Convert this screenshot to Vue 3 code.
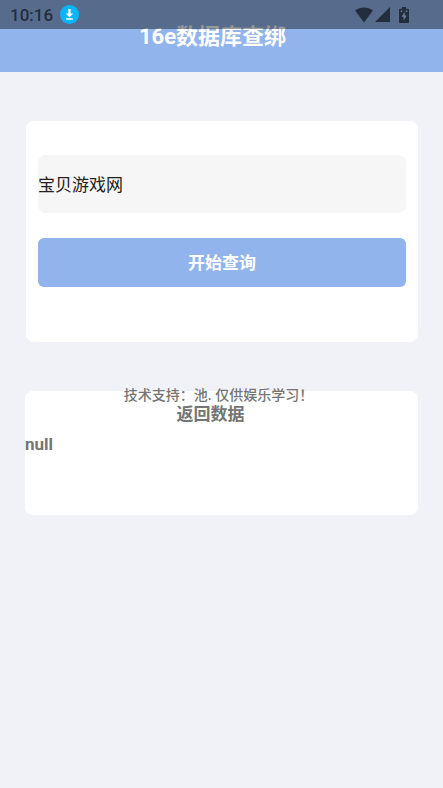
<script setup>
import { ref } from 'vue'

const keyword = ref('宝贝游戏网')
const result = ref('null')
</script>

<template>
  <div class="page">
    <div class="status">
      <span class="clock">10:16</span>
      <svg class="download" viewBox="0 0 19 19" aria-hidden="true">
        <circle cx="9.5" cy="9.5" r="9.5" fill="#06b6fc" />
        <path d="M8.3 4h2.4v4.400h2.600L9.500 12.200 5.700 8.400h2.600z M6.200 13.200h6.600v1.500H6.200z" fill="#fff" />
      </svg>
      <div class="indicators">
        <svg class="wifi" viewBox="0 0 18 16" aria-hidden="true">
          <path d="M0 3.600C2.600 1.600 5.600.500 9 .500s6.400 1.100 9 3.100L9 15.500z" fill="#222d3d" />
        </svg>
        <svg class="signal" viewBox="0 0 15 15" aria-hidden="true">
          <path d="M15 0v15H0z" fill="#222d3d" />
        </svg>
        <svg class="battery" viewBox="0 0 10 16" aria-hidden="true">
          <path d="M3 0h4v1.700h2.200q.8 0 .8.8v12.700q0 .8-.8.8H.8q-.8 0-.8-.8V2.500q0-.8.8-.8H3z" fill="#222d3d" />
          <path d="M5.700 5 2.600 9.700h2v3.800l3-4.900H5.700z M1.700 3.500h1.500v1.400H1.700z M6.800 3.500h1.500v1.400H6.800z" fill="#71809a" />
        </svg>
      </div>
    </div>

    <header class="header">
      <h1>16e数据库查绑</h1>
    </header>

    <main class="content">
      <form class="card query" @submit.prevent>
        <input v-model="keyword" class="field" type="text" aria-label="查询内容" />
        <button class="submit" type="submit">开始查询</button>
      </form>

      <section class="card output">
        <p class="support">技术支持：池. 仅供娱乐学习！</p>
        <h2>返回数据</h2>
        <p class="result">{{ result }}</p>
      </section>
    </main>
  </div>
</template>

<style>
body {
  margin: 0;
  background: #f1f2f8;
}
</style>

<style scoped>
.page {
  position: relative;
  min-height: 100vh;
  background: #f1f2f8;
  color: #757575;
  font-family: Roboto, "Noto Sans CJK SC", sans-serif;
}

.status {
  position: absolute;
  z-index: 1;
  top: 0;
  left: 0;
  right: 0;
  box-sizing: border-box;
  height: 29px;
  padding: 0 34px 0 10px;
  display: flex;
  align-items: center;
  background: rgba(0, 0, 0, 0.4);
}

.clock {
  color: #222d3d;
  font-size: 17px;
  font-weight: 500;
  line-height: 29px;
  padding-top: 2px;
}

.download {
  width: 19px;
  height: 19px;
  margin-left: 7px;
}

.indicators {
  margin-left: auto;
  display: flex;
  align-items: center;
}

.wifi {
  width: 18px;
  height: 16px;
}

.signal {
  width: 15px;
  height: 15px;
  margin-left: 2px;
}

.battery {
  width: 10px;
  height: 16px;
  margin-left: 9px;
}

.header {
  box-sizing: border-box;
  height: 72px;
  padding-top: 2px;
  background: #92b4ec;
  display: flex;
  align-items: center;
  justify-content: center;
}

h1 {
  margin: 0;
  padding-right: 18px;
  color: #fff;
  font-size: 22px;
  font-weight: 700;
  line-height: 32px;
}

.content {
  padding: 49px 25px;
  display: flex;
  flex-direction: column;
  gap: 49px;
}

.card {
  background: #fff;
  border-radius: 8px;
}

.query {
  margin-left: 1px;
  padding: 34px 12px 55px;
  display: flex;
  flex-direction: column;
  gap: 25px;
}

.field {
  box-sizing: border-box;
  width: 100%;
  height: 58px;
  padding: 0 0 2px;
  border: 0;
  border-radius: 8px;
  outline: 0;
  background: #f6f6f6;
  color: #212121;
  font-family: inherit;
  font-size: 17px;
}

.submit {
  height: 49px;
  padding: 0 0 2px;
  border: 0;
  border-radius: 6px;
  background: #92b4ec;
  color: #fff;
  font-family: inherit;
  font-size: 17px;
  font-weight: 700;
}

.output {
  min-height: 124px;
  font-weight: 700;
}

.support {
  margin: -5px 0 0;
  padding-right: 6px;
  text-align: center;
  font-size: 14px;
  font-weight: 500;
  line-height: 18px;
}

h2 {
  margin: 0;
  padding-right: 22px;
  text-align: center;
  font-size: 17px;
  font-weight: 700;
  line-height: 20px;
}

.result {
  margin: 8px 0 0;
  font-size: 17px;
  line-height: 24px;
}
</style>
